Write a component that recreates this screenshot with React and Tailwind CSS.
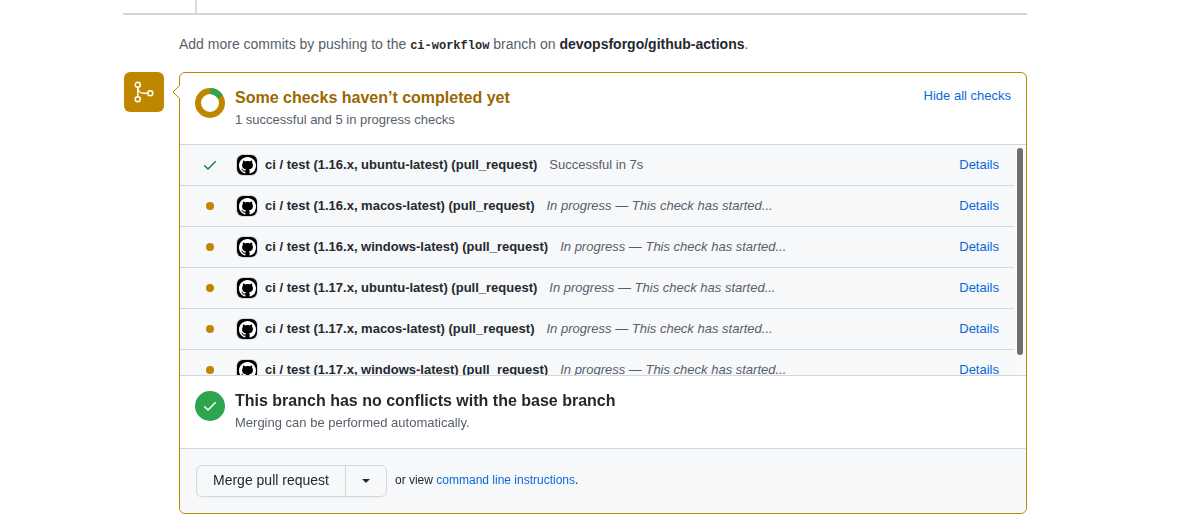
const checks = [
  { version: '1.16.x', os: 'ubuntu-latest', done: true },
  { version: '1.16.x', os: 'macos-latest' },
  { version: '1.16.x', os: 'windows-latest' },
  { version: '1.17.x', os: 'ubuntu-latest' },
  { version: '1.17.x', os: 'macos-latest' },
  { version: '1.17.x', os: 'windows-latest' },
];

function CheckIcon({ className }) {
  return (
    <svg viewBox="0 0 16 16" width="16" height="16" fill="currentColor" className={className} aria-hidden="true">
      <path d="M13.78 4.22a.75.75 0 0 1 0 1.06l-7.25 7.25a.75.75 0 0 1-1.06 0L2.22 9.28a.75.75 0 0 1 1.06-1.06L6 10.94l6.72-6.72a.75.75 0 0 1 1.06 0Z" />
    </svg>
  );
}

function MergeIcon() {
  return (
    <svg viewBox="0 0 24 24" width="24" height="24" fill="none" stroke="currentColor" strokeWidth="1.5" aria-hidden="true">
      <circle cx="5.75" cy="4.75" r="2.5" />
      <circle cx="5.75" cy="19.25" r="2.5" />
      <circle cx="18.25" cy="13.25" r="2.5" />
      <path d="M5.75 7.25v9.5M5.75 7.25c0 3.5 2.5 6 6 6h4" />
    </svg>
  );
}

function GitHubAvatar() {
  return (
    <span className="flex size-5 shrink-0 items-center justify-center rounded-md bg-black shadow-[0_0_0_1px_rgba(27,31,36,0.15)]">
      <svg viewBox="0 0 16 16" width="17" height="17" fill="#fff" aria-hidden="true">
        <path d="M8 0C3.58 0 0 3.58 0 8c0 3.54 2.29 6.53 5.47 7.59.4.07.55-.17.55-.38 0-.19-.01-.82-.01-1.49-2.01.37-2.53-.49-2.69-.94-.09-.23-.48-.94-.82-1.13-.28-.15-.68-.52-.01-.53.63-.01 1.08.58 1.23.82.72 1.21 1.87.87 2.33.66.07-.52.28-.87.51-1.07-1.78-.2-3.64-.89-3.64-3.95 0-.87.31-1.59.82-2.15-.08-.2-.36-1.02.08-2.12 0 0 .67-.21 2.2.82.64-.18 1.32-.27 2-.27s1.36.09 2 .27c1.53-1.04 2.2-.82 2.2-.82.44 1.1.16 1.92.08 2.12.51.56.82 1.27.82 2.15 0 3.07-1.87 3.75-3.65 3.95.29.25.54.73.54 1.48 0 1.07-.01 1.93-.01 2.2 0 .21.15.46.55.38A8.01 8.01 0 0 0 16 8c0-4.42-3.58-8-8-8Z" />
      </svg>
    </span>
  );
}

function ProgressRing() {
  return (
    <svg viewBox="0 0 30 30" width="30" height="30" fill="none" strokeWidth="6" className="shrink-0" aria-hidden="true">
      <circle cx="15" cy="15" r="12" stroke="#bf8700" />
      <path d="M15 3A12 12 0 0 1 25.39 9" stroke="#2da44e" />
    </svg>
  );
}

function CheckRow({ version, os, done }) {
  return (
    <li className="flex h-[41px] items-center border-b border-[#d0d7de] bg-[#f6f8fa] pr-[15px] pl-[22px] text-[13px] leading-5">
      <span className="flex w-4 shrink-0 justify-center">
        {done ? <CheckIcon className="text-[#1a7f37]" /> : <span className="size-2 rounded-full bg-[#bf8700]" />}
      </span>
      <span className="ml-[19px] flex"><GitHubAvatar /></span>
      <strong className="ml-2 font-bold whitespace-nowrap">{`ci / test (${version}, ${os}) (pull_request)`}</strong>
      <span className="ml-3 flex-1 truncate text-[#57606a]">
        {done ? 'Successful in 7s' : <em>In progress — This check has started...</em>}
      </span>
      <a href="#details" className="text-[#0969da]">Details</a>
    </li>
  );
}

export default function App() {
  return (
    <main className="bg-white pr-[153px] pl-[123px] font-['Liberation_Sans',Arial,sans-serif] text-sm text-[#24292f]">
      <div className="h-[15px] border-b-2 border-[#d0d7de] pl-[72px]">
        <div className="h-full w-0.5 bg-[#d8dee4]" />
      </div>

      <p className="mt-[19px] ml-14 leading-5 text-[#57606a]">
        Add more commits by pushing to the{' '}
        <code className="font-['Liberation_Mono',monospace] text-xs font-bold text-[#24292f]">ci-workflow</code> branch on{' '}
        <strong className="font-bold text-[#24292f]">devopsforgo/github-actions</strong>.
      </p>

      <div className="mt-[18px] flex items-start gap-[15px] pl-px">
        <div className="flex size-10 shrink-0 items-center justify-center rounded-md bg-[#bf8700] text-white">
          <MergeIcon />
        </div>

        <section className="relative min-w-0 flex-1 rounded-md border border-[#bf8700]">
          <svg viewBox="0 0 8 14" width="8" height="14" className="absolute top-3 -left-2" aria-hidden="true">
            <path d="M8 0L1 7L8 14" fill="#fff" stroke="#bf8700" />
          </svg>

          <header className="flex h-[72px] border-b border-[#d0d7de] px-[15px] pt-[15px]">
            <ProgressRing />
            <div className="ml-2.5 flex-1">
              <h2 className="text-base leading-5 font-bold text-[#9a6700]">Some checks haven’t completed yet</h2>
              <p className="text-[13px] leading-6 text-[#57606a]">1 successful and 5 in progress checks</p>
            </div>
            <button type="button" className="self-start text-[13px] leading-4 text-[#0969da]">Hide all checks</button>
          </header>

          <div className="flex h-[231px] border-b border-[#d0d7de]">
            <ul className="min-w-0 flex-1 overflow-y-auto [scrollbar-width:none]">
              {checks.map((check) => (
                <CheckRow key={check.version + check.os} {...check} />
              ))}
            </ul>
            <div className="flex w-3 shrink-0 justify-center bg-[#fafafa] pt-[3px]">
              <div className="h-[207px] w-1.5 rounded-full bg-[#6e6e6e]" />
            </div>
          </div>

          <div className="flex h-[73px] gap-2.5 border-b border-[#d0d7de] px-[15px] pt-[15px]">
            <span className="flex size-[30px] shrink-0 items-center justify-center rounded-full bg-[#2da44e] text-white">
              <CheckIcon />
            </span>
            <div>
              <h2 className="text-base leading-5 font-bold">This branch has no conflicts with the base branch</h2>
              <p className="text-[13px] leading-6 text-[#57606a]">Merging can be performed automatically.</p>
            </div>
          </div>

          <footer className="flex items-center rounded-b-md bg-[#f6f8fa] p-4">
            <div className="flex h-8 shrink-0 rounded-md border border-[#d5d8da] shadow-[0_1px_0_rgba(27,31,36,0.04)]">
              <button type="button" className="px-4 pb-0.5 text-sm">Merge pull request</button>
              <button type="button" aria-label="Select merge method" className="flex w-[41px] items-center justify-center border-l border-[#d5d8da]">
                <svg viewBox="0 0 8 4" width="8" height="4" fill="currentColor" aria-hidden="true">
                  <path d="M0 0h8L4 4Z" />
                </svg>
              </button>
            </div>
            <p className="ml-2 pb-0.5 text-xs">
              or view <a href="#command-line" className="text-[#0969da]">command line instructions</a>.
            </p>
          </footer>
        </section>
      </div>
    </main>
  );
}
